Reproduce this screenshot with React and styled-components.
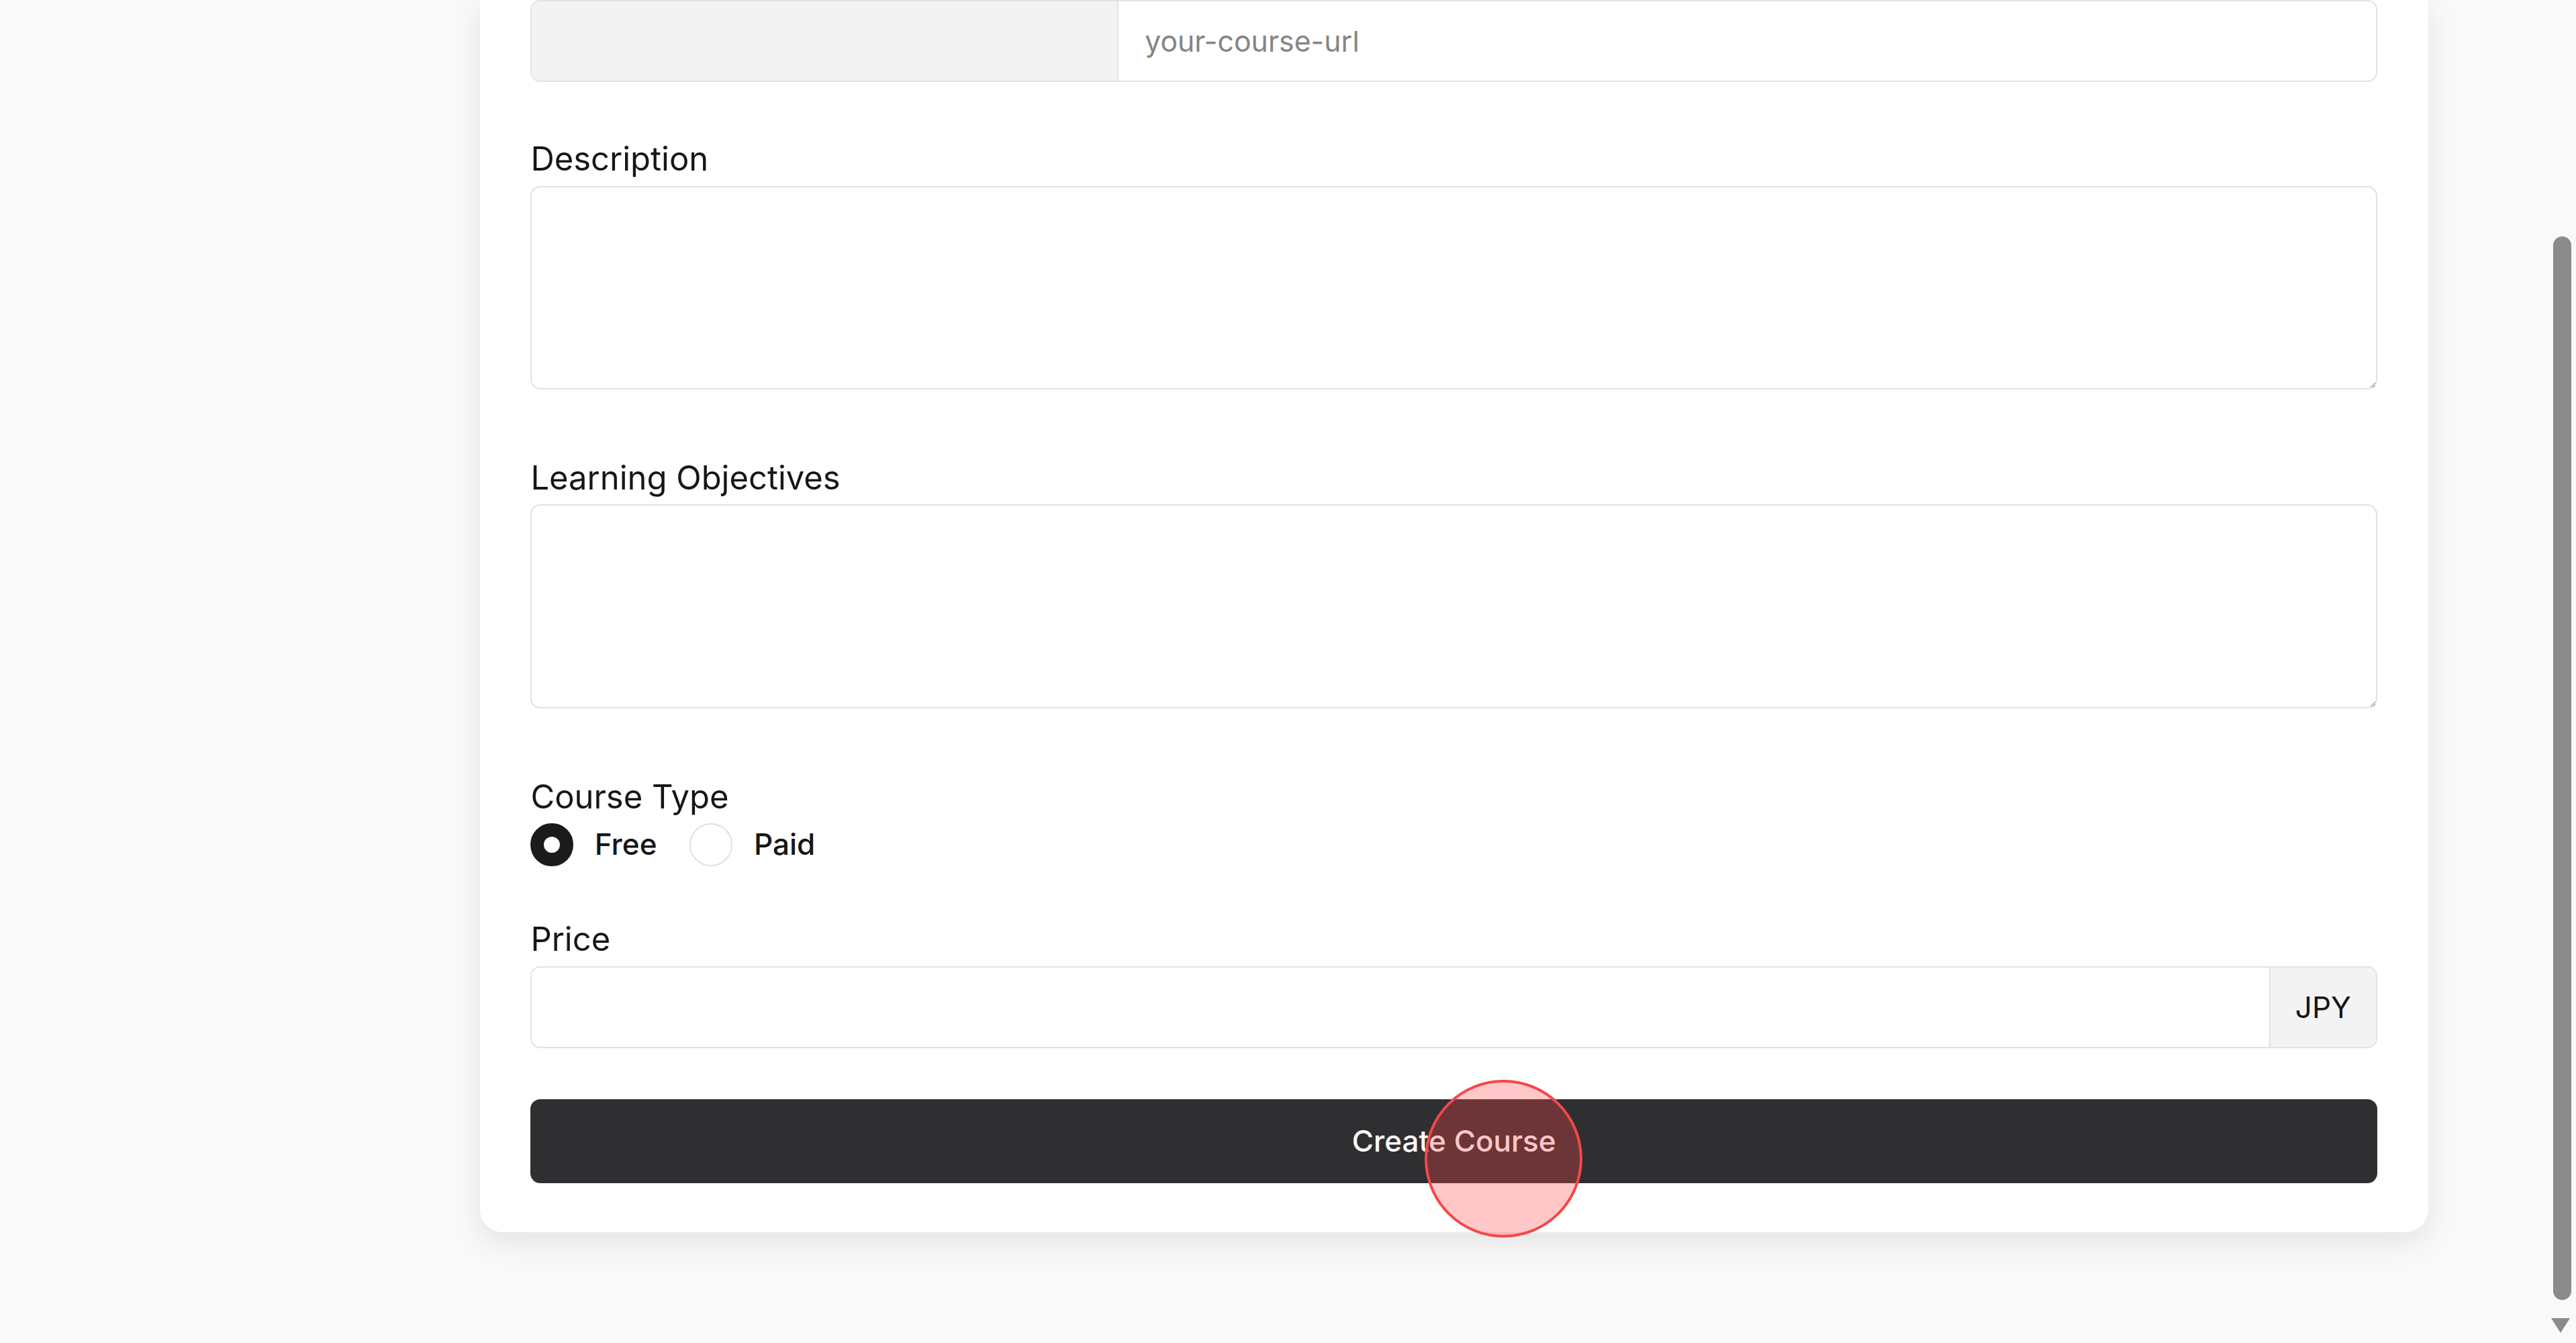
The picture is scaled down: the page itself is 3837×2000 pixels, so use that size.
import styled, { createGlobalStyle } from "styled-components";

const GlobalStyle = createGlobalStyle`
    html, body {
        margin: 0;
        padding: 0;
        background: #f9f9f9;
        overflow: hidden;
    }
    * {
        box-sizing: border-box;
    }
`

const Viewport = styled.div`
    position: relative;
    width: 1568px;
    height: 818px;
    zoom: 2.4471;
    overflow: hidden;
    background: #f9f9f9;
    font-family: "Inter", "Lato", "Liberation Sans", sans-serif;
    color: #161616;
`
const Page = styled.main`
    display: flex;
    padding-left: 292px;
`
const Card = styled.section`
    width: 1186px;
    background: #fff;
    border-radius: 0 0 14px 14px;
    box-shadow: 0 6px 18px rgba(0, 0, 0, 0.09);
    padding: 0 31px 30px;
    display: flex;
    flex-direction: column;
`
const Field = styled.div`
    display: flex;
    flex-direction: column;
    margin-top: ${props => props.$top || 0}px;
`
const Label = styled.label`
    display: block;
    font-size: 20px;
    line-height: 28px;
    margin-bottom: 2px;
    color: #161616;
`
const InputGroup = styled.div`
    display: flex;
    height: 50px;
    border: 1px solid #e2e2e2;
    border-radius: 6px;
    overflow: hidden;
    background: #fff;
`
const Addon = styled.span`
    display: flex;
    align-items: center;
    justify-content: center;
    flex: 0 0 ${props => props.$width}px;
    background: #f3f3f3;
    font-size: 18px;
    color: #161616;
    ${props => props.$side === 'left'
        ? 'border-right: 1px solid #e2e2e2;'
        : 'border-left: 1px solid #e2e2e2;'}
`
const TextInput = styled.input`
    flex: 1;
    min-width: 0;
    border: none;
    outline: none;
    padding: 0 16px;
    font-family: inherit;
    font-size: 17.5px;
    color: #161616;
    background: #fff;

    &::placeholder {
        color: #858585;
    }
`
const TextArea = styled.textarea`
    display: block;
    width: 100%;
    height: 124px;
    border: 1px solid #e2e2e2;
    border-radius: 6px;
    padding: 12px 16px;
    font-family: inherit;
    font-size: 17px;
    resize: vertical;
    outline: none;
`
const RadioRow = styled.div`
    display: flex;
    align-items: center;
    height: 26px;
`
const RadioOption = styled.label`
    display: flex;
    align-items: center;
    gap: 13px;
    margin-right: 20px;
    font-size: 18px;
    line-height: 26px;
    font-weight: 500;
    color: #161616;
`
const RadioDot = styled.span`
    position: relative;
    width: 26px;
    height: 26px;
    border-radius: 50%;
    background: ${props => props.$checked ? '#1b1b1b' : '#fff'};
    border: 1px solid ${props => props.$checked ? '#1b1b1b' : '#e0e0e0'};

    &::after {
        content: "";
        display: ${props => props.$checked ? 'block' : 'none'};
        position: absolute;
        left: 50%;
        top: 50%;
        width: 10px;
        height: 10px;
        margin: -5px 0 0 -5px;
        border-radius: 50%;
        background: #fff;
    }
`
const SubmitButton = styled.button`
    margin-top: 31px;
    height: 51px;
    width: 100%;
    border: none;
    border-radius: 6px;
    background: #2f2f31;
    color: #fff;
    font-family: inherit;
    font-size: 18px;
    font-weight: 500;
`
const ClickMark = styled.span`
    position: absolute;
    left: 867px;
    top: 657px;
    width: 96px;
    height: 96px;
    border-radius: 50%;
    border: 2px solid #f44848;
    background: rgba(255, 70, 70, 0.3);
    pointer-events: none;
`
const ScrollThumb = styled.span`
    position: absolute;
    left: 1554px;
    top: 144px;
    width: 11px;
    height: 647px;
    border-radius: 6px;
    background: #8b8b8b;
`
const ScrollArrow = styled.span`
    position: absolute;
    left: 1553px;
    top: 802px;
    width: 0;
    height: 0;
    border-left: 6px solid transparent;
    border-right: 6px solid transparent;
    border-top: 9px solid #8b8b8b;
`

function Radio({ checked, children }) {
    return (
        <RadioOption>
            <RadioDot $checked={checked} />
            {children}
        </RadioOption>
    )
}

export default function App() {
    return (
        <Viewport>
            <GlobalStyle />
            <Page>
                <Card>
                    <Field>
                        <InputGroup>
                            <Addon $width={357} $side="left" />
                            <TextInput placeholder="your-course-url" />
                        </InputGroup>
                    </Field>
                    <Field $top={33}>
                        <Label>Description</Label>
                        <TextArea />
                    </Field>
                    <Field $top={40}>
                        <Label>Learning Objectives</Label>
                        <TextArea />
                    </Field>
                    <Field $top={40}>
                        <Label>Course Type</Label>
                        <RadioRow>
                            <Radio checked>Free</Radio>
                            <Radio>Paid</Radio>
                        </RadioRow>
                    </Field>
                    <Field $top={31}>
                        <Label>Price</Label>
                        <InputGroup>
                            <TextInput />
                            <Addon $width={65} $side="right">JPY</Addon>
                        </InputGroup>
                    </Field>
                    <SubmitButton>Create Course</SubmitButton>
                </Card>
            </Page>
            <ClickMark />
            <ScrollThumb />
            <ScrollArrow />
        </Viewport>
    )
}
